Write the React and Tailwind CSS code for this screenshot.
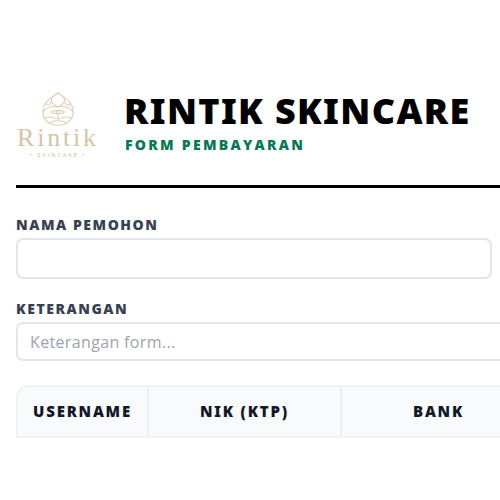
const font = { fontFamily: '"Open Sans", sans-serif' };
const heavy = { fontFamily: '"Noto Sans", sans-serif' };

function Logo() {
  return (
    <div className="flex flex-col items-center w-[84px] text-[#d6c4a3]">
      <svg viewBox="0 0 36 40" className="w-[34px] h-[35px]" fill="none" stroke="#dfcfb2" strokeWidth="1.2" preserveAspectRatio="none">
        <path d="M18 1 C24 6 34 11 34 23 C34 32 27 38 18 38 C9 38 2 32 2 23 C2 11 12 6 18 1Z" />
        <path d="M18 1 C13 4 11 8 11 10 C11 13 15 15 18 17 C21 15 25 13 25 10 C25 8 23 4 18 1Z" />
        <path d="M5 13 C8 17 11 14 11 10 M31 13 C28 17 25 14 25 10" />
        <path d="M2 23 C6 17 12 16 18 17 C24 16 30 17 34 23" />
        <path d="M11 23 C14 20 22 20 25 23 C22 26 14 26 11 23Z" />
        <circle cx="18" cy="23" r="1.6" />
        <path d="M18 26 L18 31 M4 30 C10 26 14 30 18 31 C22 30 26 26 32 30" />
        <path d="M9 35 C13 32 23 32 27 35" />
      </svg>
      <span className="mt-[-2px] text-[26px] leading-[26px] tracking-[2.8px]" style={{ fontFamily: '"Liberation Serif", serif' }}>Rintik</span>
      <span className="mt-[1px] text-[5.5px] leading-[6px] tracking-[2px] text-[#cdb994]" style={font}>• SKINCARE •</span>
    </div>
  );
}

function Field({ label, placeholder, className }) {
  return (
    <div className="flex flex-col">
      <label className="text-[14px] leading-[20px] font-extrabold tracking-[1.55px] text-[#374151]">{label}</label>
      <input
        type="text"
        placeholder={placeholder}
        className={`mt-[3px] px-[12px] border-2 border-[#e2e5ea] rounded-[7px] bg-white text-[16px] tracking-[0.35px] placeholder:text-[#9ca3af] outline-none ${className}`}
      />
    </div>
  );
}

export default function App() {
  return (
    <div className="w-[500px] h-[500px] overflow-hidden bg-white" style={font}>
      <div className="w-[760px] pt-[92px] pl-4">
        <div className="flex items-start h-[68px]">
          <Logo />
          <div className="ml-[25px] flex flex-col">
            <h1 className="-ml-[1px] text-[36px] leading-[38px] font-black text-black tracking-[1.35px]" style={heavy}>RINTIK SKINCARE</h1>
            <p className="mt-[5px] text-[14px] leading-[20px] font-extrabold tracking-[2.3px] text-[#047857]">FORM PEMBAYARAN</p>
          </div>
        </div>
        <div className="mt-[25px] h-[3px] bg-black" />
        <div className="mt-[27px]">
          <Field label="NAMA PEMOHON" className="w-[476px] h-[41px]" />
        </div>
        <div className="mt-[20px]">
          <Field label="KETERANGAN" placeholder="Keterangan form..." className="w-[740px] h-[39px]" />
        </div>
        <div className="mt-[24px] w-[740px] border-2 border-[#f0f1f4] rounded-t-[12px] bg-[#f9fafb] flex h-[53px] text-[15px] font-black tracking-[1.8px] text-[#111827]" style={heavy}>
          <div className="w-[131px] flex items-center justify-center border-r-2 border-[#eceef1]">USERNAME</div>
          <div className="w-[193px] flex items-center justify-center border-r-2 border-[#eceef1]">NIK (KTP)</div>
          <div className="w-[193px] flex items-center justify-center">BANK</div>
        </div>
      </div>
    </div>
  );
}
